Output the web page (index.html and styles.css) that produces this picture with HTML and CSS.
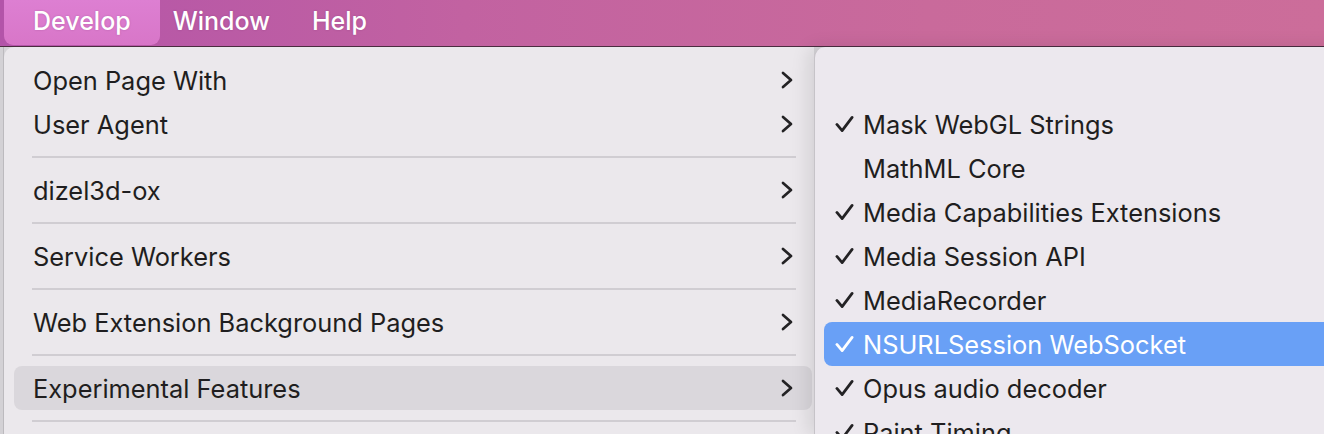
FILE: index.html
```html
<!DOCTYPE html>
<html>
<head>
<meta charset="utf-8">
<link rel="stylesheet" href="styles.css">
</head>
<body>
<div class="screen">
  <div class="menubar">
    <div class="mb-item active">Develop</div>
    <div class="mb-item">Window</div>
    <div class="mb-item">Help</div>
  </div>
  <div class="menus">
    <div class="window-edge"></div>
    <div class="menu main">
      <div class="item"><span>Open Page With</span><svg class="chev" viewBox="0 0 12 18"><path d="M2 2 L10 9 L2 16"/></svg></div>
      <div class="item"><span>User Agent</span><svg class="chev" viewBox="0 0 12 18"><path d="M2 2 L10 9 L2 16"/></svg></div>
      <div class="sep"></div>
      <div class="item"><span>dizel3d-ox</span><svg class="chev" viewBox="0 0 12 18"><path d="M2 2 L10 9 L2 16"/></svg></div>
      <div class="sep"></div>
      <div class="item"><span>Service Workers</span><svg class="chev" viewBox="0 0 12 18"><path d="M2 2 L10 9 L2 16"/></svg></div>
      <div class="sep"></div>
      <div class="item"><span>Web Extension Background Pages</span><svg class="chev" viewBox="0 0 12 18"><path d="M2 2 L10 9 L2 16"/></svg></div>
      <div class="sep"></div>
      <div class="item hover"><span>Experimental Features</span><svg class="chev" viewBox="0 0 12 18"><path d="M2 2 L10 9 L2 16"/></svg></div>
      <div class="sep"></div>
    </div>
    <div class="menu sub">
      <div class="sitem"></div>
      <div class="sitem"><svg class="check" viewBox="0 0 20 18"><path d="M2 9.5 L7.5 16 L18 2"/></svg><span>Mask WebGL Strings</span></div>
      <div class="sitem"><span class="nocheck"></span><span>MathML Core</span></div>
      <div class="sitem"><svg class="check" viewBox="0 0 20 18"><path d="M2 9.5 L7.5 16 L18 2"/></svg><span>Media Capabilities Extensions</span></div>
      <div class="sitem"><svg class="check" viewBox="0 0 20 18"><path d="M2 9.5 L7.5 16 L18 2"/></svg><span>Media Session API</span></div>
      <div class="sitem"><svg class="check" viewBox="0 0 20 18"><path d="M2 9.5 L7.5 16 L18 2"/></svg><span>MediaRecorder</span></div>
      <div class="sitem selected"><svg class="check" viewBox="0 0 20 18"><path d="M2 9.5 L7.5 16 L18 2"/></svg><span>NSURLSession WebSocket</span></div>
      <div class="sitem"><svg class="check" viewBox="0 0 20 18"><path d="M2 9.5 L7.5 16 L18 2"/></svg><span>Opus audio decoder</span></div>
      <div class="sitem"><svg class="check" viewBox="0 0 20 18"><path d="M2 9.5 L7.5 16 L18 2"/></svg><span>Paint Timing</span></div>
    </div>
  </div>
</div>
</body>
</html>
```
FILE: styles.css
```css
* { box-sizing: border-box; }
html, body {
  margin: 0;
  padding: 0;
  width: 1324px;
  height: 434px;
  overflow: hidden;
  background: #d6d4d8;
}
.screen {
  width: 1324px;
  height: 434px;
  overflow: hidden;
  font-family: Inter, "Liberation Sans", sans-serif;
  font-size: 25.4px;
  color: #1f1e20;
}
.menubar {
  height: 47px;
  display: flex;
  align-items: stretch;
  padding-left: 4px;
  gap: 42px;
  background: linear-gradient(90deg, #b354a9 0%, #c262a1 35%, #c96a9b 70%, #cc6d9a 100%);
  border-bottom: 1px solid #4a2d40;
}
.mb-item {
  display: flex;
  align-items: center;
  padding-bottom: 4px;
  color: #fff;
  font-weight: 500;
  font-size: 25px;
  text-shadow: 0 0 2px rgba(80, 20, 70, 0.25);
}
.mb-item.active {
  padding: 0 29px 4px 29px;
  margin-right: -29px;
  background: linear-gradient(180deg, #dd7fd2, #d876c8);
  border-radius: 0 0 9px 9px;
  margin-bottom: 1px;
}
.menus {
  display: flex;
  align-items: flex-start;
  height: 387px;
}
.window-edge {
  width: 4px;
  flex-shrink: 0;
  align-self: stretch;
  background: #d3d1d5;
  border-right: 1px solid #bcbabe;
}
.menu {
  background: #ebe8ec;
  align-self: stretch;
}
.main {
  width: 810px;
  flex-shrink: 0;
  padding: 11px 2px 0 10px;
  border-top-left-radius: 10px;
}
.item {
  height: 44px;
  display: flex;
  align-items: center;
  justify-content: space-between;
  padding: 0 19px 0 19px;
  border-radius: 8px;
  white-space: nowrap;
}
.item.hover {
  background: #dad7dc;
}
.chev {
  width: 12px;
  height: 18px;
  fill: none;
  stroke: #232224;
  stroke-width: 2.7;
  stroke-linecap: round;
  stroke-linejoin: round;
}
.sep {
  height: 22px;
  display: flex;
  align-items: center;
  margin: 0 16px 0 18px;
}
.sep::before {
  content: "";
  display: block;
  width: 100%;
  height: 2px;
  background: #d0cdd2;
}
.sub {
  width: 560px;
  flex-shrink: 0;
  padding: 11px 0 0 9px;
  background: #ece8ee;
  border-left: 1px solid #c6c3c8;
  border-top-left-radius: 11px;
  box-shadow: -6px 0 18px rgba(0, 0, 0, 0.10);
}
.sitem {
  height: 44px;
  display: flex;
  align-items: center;
  padding-left: 11px;
  gap: 9px;
  border-radius: 8px 0 0 8px;
  white-space: nowrap;
}
.sitem.selected {
  background: #69a0f6;
  color: #fff;
}
.check {
  width: 19px;
  height: 18px;
  fill: none;
  stroke: #232224;
  stroke-width: 2.9;
  stroke-linecap: round;
  stroke-linejoin: round;
}
.sitem.selected .check { stroke: #fff; }
.nocheck {
  display: inline-block;
  width: 19px;
  height: 18px;
}
```
